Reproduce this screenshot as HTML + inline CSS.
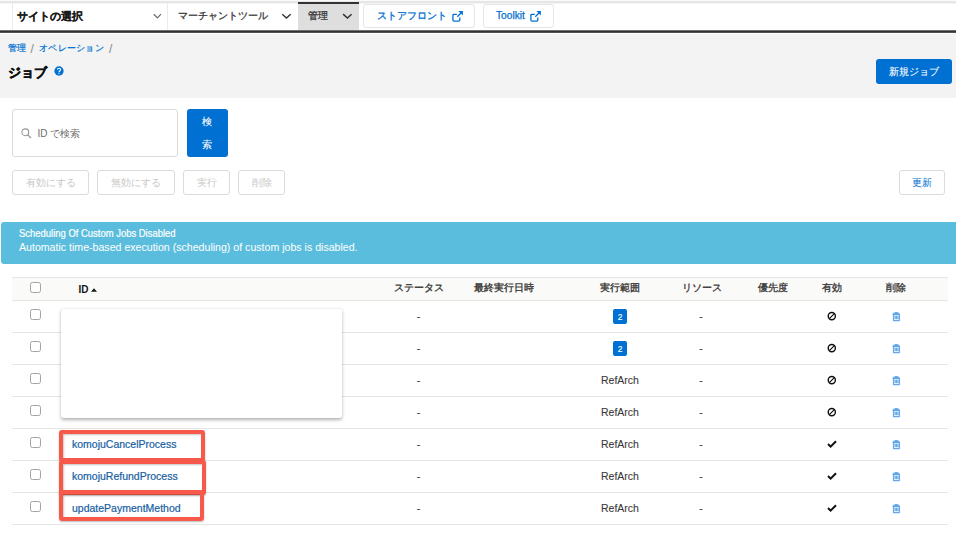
<!DOCTYPE html>
<html><head><meta charset="utf-8">
<style>
*{box-sizing:border-box;margin:0;padding:0}
html,body{width:956px;height:533px;overflow:hidden;background:#fff}
body{position:relative;font-family:"Liberation Sans",sans-serif;color:#3e3e3c}
.a{position:absolute;white-space:nowrap}
/* nav */
#topstrip{left:0;top:0;width:956px;height:4px;background:linear-gradient(#fafafa 0,#fafafa 1px,#e6e6e6 1px,#e6e6e6 3px,#f4f4f4 3px)}
#nav{left:0;top:4px;width:956px;height:26px;background:#fff}
#navline{left:0;top:30px;width:956px;height:4px;background:linear-gradient(#6e6e6e 0,#6e6e6e 1px,#353330 1px,#353330 2px,#505050 2px,#505050 3px,#fff 3px)}
.vdiv{top:3px;width:1px;height:27px;background:#ebebeb}
.chev{width:10px;height:6px}
#hdr{left:0;top:34px;width:956px;height:64px;background:#f3f3f3}
.btn{border:1px solid #dddbda;border-radius:3px;background:#fff}
.jp{font-size:10.5px}
.cb{width:11px;height:10.5px;border:1px solid #a3a3a3;border-radius:2.5px;background:#fff}
.th{font-size:10px;font-weight:bold;color:#474543}
.c{width:100px;text-align:center}
.td{font-size:10.5px;color:#3a3a38;-webkit-text-stroke:0.1px #3a3a38}
.lk{font-size:10.5px;color:#17609f;-webkit-text-stroke:0.2px #17609f}
.rl{left:12px;width:936px;height:1px;background:#e5e5e5}
.badge{width:14px;height:15px;background:#0070d2;border-radius:2px;color:#fff;font-size:8.5px;text-align:center;line-height:16.5px;-webkit-text-stroke:0.12px #fff}
.rb{border:4.75px solid #f75a4b;border-radius:3px;box-shadow:inset 1px 1px 2px rgba(0,0,0,.22),0 1px 2px rgba(0,0,0,.28)}
</style></head><body>
<div class="a" id="topstrip"></div>
<div class="a" id="nav"></div>
<div class="a vdiv" style="left:12px"></div>
<div class="a" style="left:17.3px;top:10px;font-size:10.5px;font-weight:bold;color:#1a1a1a;-webkit-text-stroke:0.2px #1a1a1a">サイトの選択</div>
<svg class="a" style="left:152px;top:12px;width:10px;height:8px" viewBox="0 0 10 8"><path d="M1.7 2.2 L5.5 5.9 L8.9 2.2" fill="none" stroke="#6b6b6b" stroke-width="1.2"/></svg>
<div class="a vdiv" style="left:167px"></div>
<div class="a" style="left:178px;top:8.5px;font-size:10px;color:#3a3a3a;-webkit-text-stroke:0.3px #3a3a3a">マーチャントツール</div>
<svg class="a" style="left:281px;top:12px;width:11px;height:8px" viewBox="0 0 11 8"><path d="M1.3 2.2 L5.4 6 L9.7 2.2" fill="none" stroke="#333" stroke-width="1.4"/></svg>
<div class="a" style="left:298px;top:2px;width:61px;height:28px;background:#dedede;border-top:2px solid #333"></div>
<div class="a" style="left:308px;top:8.5px;font-size:10px;color:#3a3a3a;-webkit-text-stroke:0.3px #3a3a3a">管理</div>
<svg class="a" style="left:342px;top:12px;width:11px;height:8px" viewBox="0 0 11 8"><path d="M1.1 2.1 L5.4 6 L9.6 2.2" fill="none" stroke="#333" stroke-width="1.5"/></svg>
<div class="a btn" style="left:363px;top:4px;width:112px;height:24px;border-color:#e5e5e5"></div>
<div class="a" style="left:377px;top:8.5px;font-size:10px;color:#0070d2;-webkit-text-stroke:0.3px #0070d2">ストアフロント</div>
<svg class="a" style="left:452px;top:11px;width:11px;height:11px" viewBox="0 0 11 11"><path d="M4.8 3.3 H2 Q0.9 3.3 0.9 4.4 V9.1 Q0.9 10.1 2 10.1 H6.8 Q7.8 10.1 7.8 9.1 V6.4" fill="none" stroke="#0070d2" stroke-width="1.3"/><path d="M5.3 5.7 L8.8 2.2" stroke="#0070d2" stroke-width="1.3"/><path d="M6.4 0.1 H10.9 V4.6 Z" fill="#0070d2"/></svg>
<div class="a btn" style="left:483px;top:4px;width:71px;height:24px;border-color:#e5e5e5"></div>
<div class="a" style="left:496px;top:10px;font-size:10.2px;color:#0070d2;-webkit-text-stroke:0.25px #0070d2">Toolkit</div>
<svg class="a" style="left:530px;top:11px;width:11px;height:11px" viewBox="0 0 11 11"><path d="M4.8 3.3 H2 Q0.9 3.3 0.9 4.4 V9.1 Q0.9 10.1 2 10.1 H6.8 Q7.8 10.1 7.8 9.1 V6.4" fill="none" stroke="#0070d2" stroke-width="1.3"/><path d="M5.3 5.7 L8.8 2.2" stroke="#0070d2" stroke-width="1.3"/><path d="M6.4 0.1 H10.9 V4.6 Z" fill="#0070d2"/></svg>
<div class="a" id="navline"></div>

<!-- header -->
<div class="a" id="hdr"></div>
<div class="a" style="left:8px;top:42px;font-size:9px;letter-spacing:0.3px;color:#0070d2;-webkit-text-stroke:0.2px #0070d2">管理</div><div class="a" style="left:30.5px;top:42px;font-size:12px;color:#888">/</div><div class="a" style="left:39px;top:42px;font-size:9px;letter-spacing:0.3px;color:#0070d2;-webkit-text-stroke:0.2px #0070d2">オペレーション</div><div class="a" style="left:109px;top:42px;font-size:12px;color:#888">/</div>
<div class="a" style="left:8px;top:63.5px;font-size:13.2px;font-weight:bold;color:#111;-webkit-text-stroke:0.45px #111">ジョブ</div>
<svg class="a" style="left:53.7px;top:66.2px;width:10px;height:10px" viewBox="0 0 10 10"><circle cx="5" cy="5" r="4.65" fill="#0070d2"/><path d="M3.4 3.8 Q3.5 2.3 5.1 2.3 Q6.6 2.3 6.6 3.6 Q6.6 4.4 5.7 5 Q5 5.5 5 6.3" fill="none" stroke="#fff" stroke-width="1.1"/><circle cx="5" cy="7.6" r="0.65" fill="#fff"/></svg>
<div class="a" style="left:876px;top:59px;width:76px;height:25px;background:#0070d2;border-radius:3px;color:#fff;font-size:10px;text-align:center;line-height:25px;-webkit-text-stroke:0.1px #fff">新規ジョブ</div>

<!-- search -->
<div class="a btn" style="left:12px;top:109px;width:166px;height:48px"></div>
<svg class="a" style="left:21px;top:128px;width:11px;height:11px" viewBox="0 0 11 11"><circle cx="4.3" cy="4.3" r="3.4" fill="none" stroke="#959595" stroke-width="1.1"/><path d="M6.8 6.8 L10 10" stroke="#959595" stroke-width="1.2"/></svg>
<div class="a" style="left:37.5px;top:127px;font-size:10px;color:#6b6b6b">ID で検索</div>
<div class="a" style="left:187px;top:109px;width:41px;height:48px;background:#0070d2;border-radius:3px"></div>
<div class="a" style="left:202px;top:115px;font-size:10px;color:#fff;-webkit-text-stroke:0.1px #fff">検</div>
<div class="a" style="left:202px;top:138px;font-size:10px;color:#fff;-webkit-text-stroke:0.1px #fff">索</div>

<!-- action buttons -->
<div class="a btn" style="left:12px;top:170px;width:77px;height:25px;color:#c9c7c5;font-size:10px;text-align:center;line-height:23px">有効にする</div>
<div class="a btn" style="left:97px;top:170px;width:78px;height:25px;color:#c9c7c5;font-size:10px;text-align:center;line-height:23px">無効にする</div>
<div class="a btn" style="left:183px;top:170px;width:47px;height:25px;color:#c9c7c5;font-size:10px;text-align:center;line-height:23px">実行</div>
<div class="a btn" style="left:238px;top:170px;width:47px;height:25px;color:#c9c7c5;font-size:10px;text-align:center;line-height:23px">削除</div>
<div class="a btn" style="left:899px;top:170px;width:46px;height:25px;color:#0070d2;font-size:10px;text-align:center;line-height:23px">更新</div>

<!-- banner -->
<div class="a" style="left:0.7px;top:222px;width:956px;height:41.6px;background:#5bbddd;border-radius:3px 0 0 3px"></div>
<div class="a" style="left:19px;top:227px;font-size:10.5px;color:#fff;transform:scaleX(0.9);transform-origin:0 0;-webkit-text-stroke:0.2px #fff">Scheduling Of Custom Jobs Disabled</div>
<div class="a" style="left:19px;top:241px;font-size:10.6px;color:#fff">Automatic time-based execution (scheduling) of custom jobs is disabled.</div>

<!-- table -->
<div class="a" style="left:12px;top:277px;width:936px;height:24px;background:#fafaf9;border-top:1px solid #e5e5e5;border-bottom:1px solid #e5e5e5"></div>
<div class="a cb" style="left:30px;top:282px"></div>
<div class="a th" style="left:78.5px;top:284px;color:#161616">ID</div>
<svg class="a" style="left:91px;top:287.5px;width:6px;height:4px" viewBox="0 0 6 4"><path d="M0 3.7 L3 0.3 L6 3.7Z" fill="#161616"/></svg>
<div class="a th c" style="left:368.5px;top:281px">ステータス</div>
<div class="a th c" style="left:453.5px;top:281px">最終実行日時</div>
<div class="a th c" style="left:570px;top:281px">実行範囲</div>
<div class="a th c" style="left:651.5px;top:281px">リソース</div>
<div class="a th c" style="left:723px;top:281px">優先度</div>
<div class="a th c" style="left:781.5px;top:281px">有効</div>
<div class="a th c" style="left:846px;top:281px">削除</div>
<div class="a rl" style="top:332px"></div>
<div class="a cb" style="left:30px;top:309px"></div>
<div class="a td c" style="left:368.5px;top:310px">-</div>
<div class="a td c" style="left:651px;top:310px">-</div>
<div class="a badge" style="left:613px;top:309px">2</div>
<svg class="a" style="left:827px;top:311px;width:10px;height:10px" viewBox="0 0 10 10"><circle cx="4.8" cy="5.1" r="3.6" fill="none" stroke="#111" stroke-width="1.4"/><path d="M7.3 2.6 L2.3 7.6" stroke="#111" stroke-width="1.2"/></svg>
<svg class="a" style="left:892px;top:312px;width:9px;height:10px" viewBox="0 0 9 10"><path d="M0.3 2.9 Q1.2 0.1 4.3 0.1 Q7.4 0.1 8.3 2.9 Z" fill="#62a8ea"/><rect x="0.9" y="2.6" width="7.1" height="6.6" rx="0.9" fill="#62a8ea"/><rect x="2" y="3.1" width="4.9" height="0.8" fill="#fff" opacity="0.85"/><rect x="2" y="7.1" width="4.9" height="0.9" fill="#fff" opacity="0.9"/><rect x="2.1" y="3.9" width="1.4" height="3.2" fill="#fff" opacity="0.45"/><rect x="5.3" y="3.9" width="1.4" height="3.2" fill="#fff" opacity="0.45"/></svg>
<div class="a rl" style="top:364px"></div>
<div class="a cb" style="left:30px;top:341px"></div>
<div class="a td c" style="left:368.5px;top:342px">-</div>
<div class="a td c" style="left:651px;top:342px">-</div>
<div class="a badge" style="left:613px;top:341px">2</div>
<svg class="a" style="left:827px;top:343px;width:10px;height:10px" viewBox="0 0 10 10"><circle cx="4.8" cy="5.1" r="3.6" fill="none" stroke="#111" stroke-width="1.4"/><path d="M7.3 2.6 L2.3 7.6" stroke="#111" stroke-width="1.2"/></svg>
<svg class="a" style="left:892px;top:344px;width:9px;height:10px" viewBox="0 0 9 10"><path d="M0.3 2.9 Q1.2 0.1 4.3 0.1 Q7.4 0.1 8.3 2.9 Z" fill="#62a8ea"/><rect x="0.9" y="2.6" width="7.1" height="6.6" rx="0.9" fill="#62a8ea"/><rect x="2" y="3.1" width="4.9" height="0.8" fill="#fff" opacity="0.85"/><rect x="2" y="7.1" width="4.9" height="0.9" fill="#fff" opacity="0.9"/><rect x="2.1" y="3.9" width="1.4" height="3.2" fill="#fff" opacity="0.45"/><rect x="5.3" y="3.9" width="1.4" height="3.2" fill="#fff" opacity="0.45"/></svg>
<div class="a rl" style="top:396px"></div>
<div class="a cb" style="left:30px;top:373px"></div>
<div class="a td c" style="left:368.5px;top:374px">-</div>
<div class="a td c" style="left:651px;top:374px">-</div>
<div class="a td c" style="left:570px;top:374px">RefArch</div>
<svg class="a" style="left:827px;top:375px;width:10px;height:10px" viewBox="0 0 10 10"><circle cx="4.8" cy="5.1" r="3.6" fill="none" stroke="#111" stroke-width="1.4"/><path d="M7.3 2.6 L2.3 7.6" stroke="#111" stroke-width="1.2"/></svg>
<svg class="a" style="left:892px;top:376px;width:9px;height:10px" viewBox="0 0 9 10"><path d="M0.3 2.9 Q1.2 0.1 4.3 0.1 Q7.4 0.1 8.3 2.9 Z" fill="#62a8ea"/><rect x="0.9" y="2.6" width="7.1" height="6.6" rx="0.9" fill="#62a8ea"/><rect x="2" y="3.1" width="4.9" height="0.8" fill="#fff" opacity="0.85"/><rect x="2" y="7.1" width="4.9" height="0.9" fill="#fff" opacity="0.9"/><rect x="2.1" y="3.9" width="1.4" height="3.2" fill="#fff" opacity="0.45"/><rect x="5.3" y="3.9" width="1.4" height="3.2" fill="#fff" opacity="0.45"/></svg>
<div class="a rl" style="top:428px"></div>
<div class="a cb" style="left:30px;top:405px"></div>
<div class="a td c" style="left:368.5px;top:406px">-</div>
<div class="a td c" style="left:651px;top:406px">-</div>
<div class="a td c" style="left:570px;top:406px">RefArch</div>
<svg class="a" style="left:827px;top:407px;width:10px;height:10px" viewBox="0 0 10 10"><circle cx="4.8" cy="5.1" r="3.6" fill="none" stroke="#111" stroke-width="1.4"/><path d="M7.3 2.6 L2.3 7.6" stroke="#111" stroke-width="1.2"/></svg>
<svg class="a" style="left:892px;top:408px;width:9px;height:10px" viewBox="0 0 9 10"><path d="M0.3 2.9 Q1.2 0.1 4.3 0.1 Q7.4 0.1 8.3 2.9 Z" fill="#62a8ea"/><rect x="0.9" y="2.6" width="7.1" height="6.6" rx="0.9" fill="#62a8ea"/><rect x="2" y="3.1" width="4.9" height="0.8" fill="#fff" opacity="0.85"/><rect x="2" y="7.1" width="4.9" height="0.9" fill="#fff" opacity="0.9"/><rect x="2.1" y="3.9" width="1.4" height="3.2" fill="#fff" opacity="0.45"/><rect x="5.3" y="3.9" width="1.4" height="3.2" fill="#fff" opacity="0.45"/></svg>
<div class="a rl" style="top:460px"></div>
<div class="a cb" style="left:30px;top:437px"></div>
<div class="a lk" style="left:72px;top:438px">komojuCancelProcess</div>
<div class="a td c" style="left:368.5px;top:438px">-</div>
<div class="a td c" style="left:651px;top:438px">-</div>
<div class="a td c" style="left:570px;top:438px">RefArch</div>
<svg class="a" style="left:827px;top:440px;width:10px;height:8px" viewBox="0 0 10 8"><path d="M1 4 L3.6 6.6 L9 1.2" fill="none" stroke="#111" stroke-width="2"/></svg>
<svg class="a" style="left:892px;top:440px;width:9px;height:10px" viewBox="0 0 9 10"><path d="M0.3 2.9 Q1.2 0.1 4.3 0.1 Q7.4 0.1 8.3 2.9 Z" fill="#62a8ea"/><rect x="0.9" y="2.6" width="7.1" height="6.6" rx="0.9" fill="#62a8ea"/><rect x="2" y="3.1" width="4.9" height="0.8" fill="#fff" opacity="0.85"/><rect x="2" y="7.1" width="4.9" height="0.9" fill="#fff" opacity="0.9"/><rect x="2.1" y="3.9" width="1.4" height="3.2" fill="#fff" opacity="0.45"/><rect x="5.3" y="3.9" width="1.4" height="3.2" fill="#fff" opacity="0.45"/></svg>
<div class="a rl" style="top:492px"></div>
<div class="a cb" style="left:30px;top:469px"></div>
<div class="a lk" style="left:72px;top:470px">komojuRefundProcess</div>
<div class="a td c" style="left:368.5px;top:470px">-</div>
<div class="a td c" style="left:651px;top:470px">-</div>
<div class="a td c" style="left:570px;top:470px">RefArch</div>
<svg class="a" style="left:827px;top:472px;width:10px;height:8px" viewBox="0 0 10 8"><path d="M1 4 L3.6 6.6 L9 1.2" fill="none" stroke="#111" stroke-width="2"/></svg>
<svg class="a" style="left:892px;top:472px;width:9px;height:10px" viewBox="0 0 9 10"><path d="M0.3 2.9 Q1.2 0.1 4.3 0.1 Q7.4 0.1 8.3 2.9 Z" fill="#62a8ea"/><rect x="0.9" y="2.6" width="7.1" height="6.6" rx="0.9" fill="#62a8ea"/><rect x="2" y="3.1" width="4.9" height="0.8" fill="#fff" opacity="0.85"/><rect x="2" y="7.1" width="4.9" height="0.9" fill="#fff" opacity="0.9"/><rect x="2.1" y="3.9" width="1.4" height="3.2" fill="#fff" opacity="0.45"/><rect x="5.3" y="3.9" width="1.4" height="3.2" fill="#fff" opacity="0.45"/></svg>
<div class="a rl" style="top:524px"></div>
<div class="a cb" style="left:30px;top:501px"></div>
<div class="a lk" style="left:72px;top:502px">updatePaymentMethod</div>
<div class="a td c" style="left:368.5px;top:502px">-</div>
<div class="a td c" style="left:651px;top:502px">-</div>
<div class="a td c" style="left:570px;top:502px">RefArch</div>
<svg class="a" style="left:827px;top:504px;width:10px;height:8px" viewBox="0 0 10 8"><path d="M1 4 L3.6 6.6 L9 1.2" fill="none" stroke="#111" stroke-width="2"/></svg>
<svg class="a" style="left:892px;top:504px;width:9px;height:10px" viewBox="0 0 9 10"><path d="M0.3 2.9 Q1.2 0.1 4.3 0.1 Q7.4 0.1 8.3 2.9 Z" fill="#62a8ea"/><rect x="0.9" y="2.6" width="7.1" height="6.6" rx="0.9" fill="#62a8ea"/><rect x="2" y="3.1" width="4.9" height="0.8" fill="#fff" opacity="0.85"/><rect x="2" y="7.1" width="4.9" height="0.9" fill="#fff" opacity="0.9"/><rect x="2.1" y="3.9" width="1.4" height="3.2" fill="#fff" opacity="0.45"/><rect x="5.3" y="3.9" width="1.4" height="3.2" fill="#fff" opacity="0.45"/></svg>
<!-- popup -->
<div class="a" style="left:61.3px;top:309px;width:281px;height:109.3px;background:#fff;border-radius:3px;box-shadow:0 1.5px 3.5px rgba(0,0,0,0.3)"></div>
<!-- red boxes -->
<div class="a rb" style="left:59.3px;top:430px;width:145.6px;height:32px"></div>
<div class="a rb" style="left:59.3px;top:459.5px;width:146.6px;height:35px"></div>
<div class="a rb" style="left:59.3px;top:490.3px;width:145px;height:31px"></div>
</body></html>
